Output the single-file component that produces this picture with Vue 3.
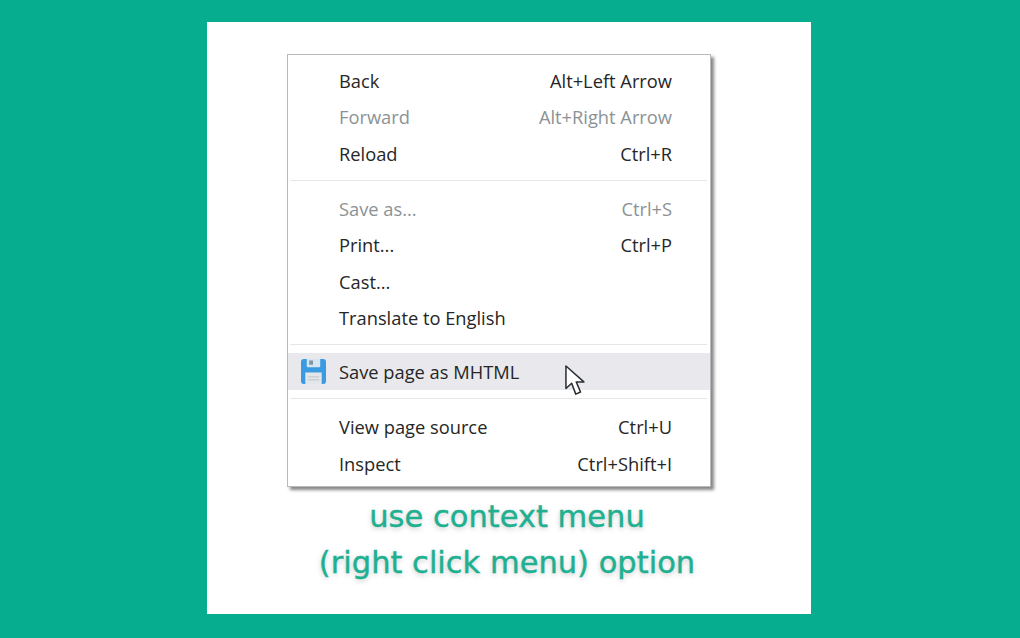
<template>
  <main class="page">
    <section class="panel">
      <div class="menu">
        <template v-for="(group, i) in groups" :key="i">
          <div v-if="i > 0" class="separator" :class="`sep-${i}`"></div>
          <div
            v-for="item in group"
            :key="item.label"
            class="row"
            :class="{ disabled: item.disabled, active: item.active }"
          >
            <svg v-if="item.active" class="save-icon" viewBox="0 0 26 26" aria-hidden="true">
              <path d="M3 0h20a3 3 0 0 1 3 3v20a3 3 0 0 1-3 3H3a3 3 0 0 1-3-3V3a3 3 0 0 1 3-3z" fill="#3a9ae2" />
              <path d="M6 0h14v7.5a1 1 0 0 1-1 1H7a1 1 0 0 1-1-1z" fill="#d5e6f2" />
              <rect x="8.5" y="1.5" width="4" height="4.5" fill="#7f97a8" />
              <rect x="4.5" y="14" width="17" height="12" fill="#e4e7e9" />
              <rect x="7" y="18" width="12" height="1.2" fill="#c3c9cd" />
              <rect x="7" y="21" width="12" height="1.2" fill="#c3c9cd" />
            </svg>
            <span class="label">{{ item.label }}</span>
            <span class="shortcut">{{ item.shortcut }}</span>
          </div>
        </template>
        <svg class="cursor" viewBox="0 0 21 33" preserveAspectRatio="none" aria-hidden="true">
          <path
            d="M1 1v24l6-5.6L11.3 31l5-2.2-4.5-10.8h8z"
            fill="#fff"
            stroke="#2b2f33"
            stroke-width="1.6"
            stroke-linejoin="round"
          />
        </svg>
      </div>
      <p class="caption first">use context menu</p>
      <p class="caption">(right click menu) option</p>
    </section>
  </main>
</template>

<script setup>
const groups = [
  [
    { label: 'Back', shortcut: 'Alt+Left Arrow' },
    { label: 'Forward', shortcut: 'Alt+Right Arrow', disabled: true },
    { label: 'Reload', shortcut: 'Ctrl+R' }
  ],
  [
    { label: 'Save as...', shortcut: 'Ctrl+S', disabled: true },
    { label: 'Print...', shortcut: 'Ctrl+P' },
    { label: 'Cast...' },
    { label: 'Translate to English' }
  ],
  [{ label: 'Save page as MHTML', active: true }],
  [
    { label: 'View page source', shortcut: 'Ctrl+U' },
    { label: 'Inspect', shortcut: 'Ctrl+Shift+I' }
  ]
]
</script>

<style scoped>
.page {
  display: flex;
  height: 638px;
  padding: 22px 0 0 207px;
  box-sizing: border-box;
  background: #06ae8f;
  overflow: hidden;
}

.panel {
  width: 604px;
  height: 592px;
  padding: 32px 84px 0 80px;
  box-sizing: border-box;
  background: #fff;
}

.menu {
  position: relative;
  width: 424px;
  height: 433px;
  padding: 7px 0;
  box-sizing: border-box;
  border: 1px solid #b9b9b9;
  background: #fff;
  box-shadow: 3px 3px 3px rgba(70, 70, 70, 0.65);
  font-family: "Open Sans", "Noto Sans", sans-serif;
  font-size: 18.3px;
  color: #262626;
}

.row {
  position: relative;
  display: flex;
  align-items: center;
  justify-content: space-between;
  height: 36.5px;
  padding: 0 38px 0 51px;
}

.row.disabled {
  color: #8b9296;
}

.row.active {
  background: #e9e9ed;
}

.shortcut {
  white-space: nowrap;
}

.separator {
  height: 1px;
  margin: 8px 3px 8px 2px;
  background: #e6e6e6;
}

.sep-1 {
  margin-bottom: 9.5px;
}

.sep-3 {
  margin-bottom: 10px;
}

.save-icon {
  position: absolute;
  left: 13px;
  top: 6px;
  width: 25px;
  height: 25px;
}

.cursor {
  position: absolute;
  left: 277px;
  top: 310px;
  width: 20px;
  height: 31px;
}

.caption {
  width: 440px;
  margin: 0;
  font-family: "DejaVu Sans", sans-serif;
  font-size: 30.5px;
  line-height: 46px;
  text-align: center;
  color: #1eb091;
  -webkit-text-stroke: 0.4px #1eb091;
  text-shadow: 0 2px 5px rgba(120, 120, 120, 0.4);
  white-space: nowrap;
}

.caption.first {
  margin-top: 7px;
}
</style>
